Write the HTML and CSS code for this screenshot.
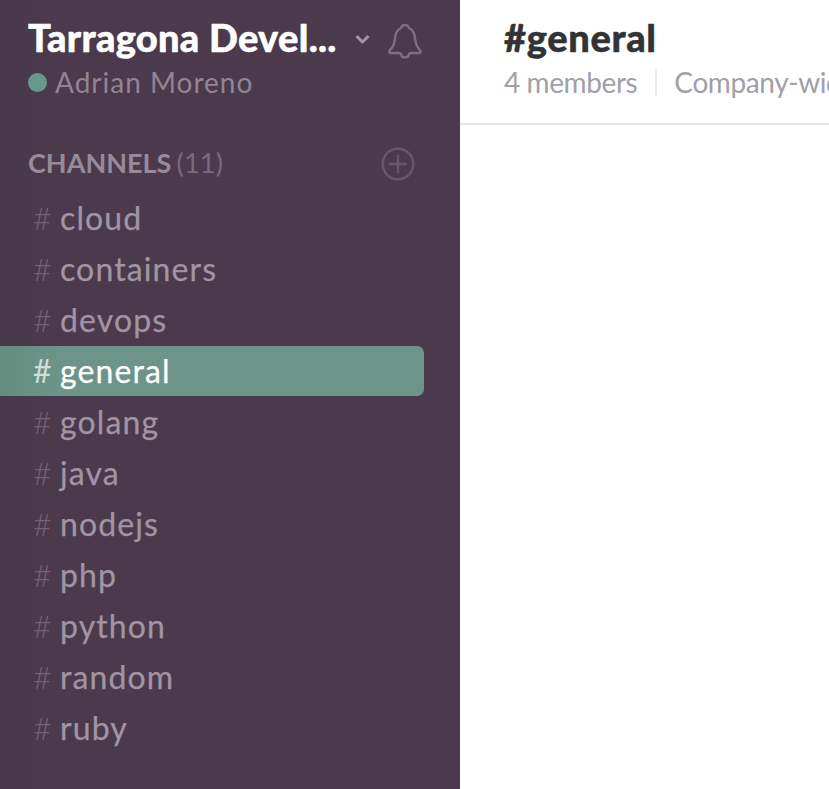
FILE: index.html
```html
<!DOCTYPE html>
<html lang="en">
<head>
<meta charset="utf-8">
<title>Tarragona Developers</title>
<link rel="stylesheet" href="styles.css">
</head>
<body>
<div class="app">
  <aside class="sidebar">
    <header class="team">
      <div class="team-row">
        <h1 class="team-name">Tarragona Devel...</h1>
        <svg class="chevron" width="18" height="14" viewBox="0 0 18 14"><path d="M2.500 4l6 6 6-6"/></svg>
        <svg class="bell" width="36" height="38" viewBox="0 0 36 38"><path d="M18 3C15.800 3 14.500 4 14 6C10.500 7.500 8.500 11 8 16C7.500 21.500 6 25.500 3 28C1.500 29.500 2.500 31 4.500 31H12.500C14 31 14 32 14.500 33.500C15.500 36 20.500 36 21.500 33.500C22 32 22 31 23.500 31H31.500C33.500 31 34.500 29.500 33 28C30 25.500 28.500 21.500 28 16C27.500 11 25.500 7.500 22 6C21.500 4 20.200 3 18 3Z"/></svg>
      </div>
      <div class="user"><span class="presence"></span><span class="user-name">Adrian Moreno</span></div>
    </header>
    <div class="section">
      <h2 class="section-title">CHANNELS</h2><span class="count">(11)</span>
      <svg class="add" width="34" height="34" viewBox="0 0 34 34"><circle cx="17" cy="17" r="15.300"/><path d="M17 9v16M9 17h16"/></svg>
    </div>
    <ul class="channels">
      <li><span class="hash">#</span><span class="name">cloud</span></li>
      <li><span class="hash">#</span><span class="name">containers</span></li>
      <li><span class="hash">#</span><span class="name">devops</span></li>
      <li class="active"><span class="hash">#</span><span class="name">general</span></li>
      <li><span class="hash">#</span><span class="name">golang</span></li>
      <li><span class="hash">#</span><span class="name">java</span></li>
      <li><span class="hash">#</span><span class="name">nodejs</span></li>
      <li><span class="hash">#</span><span class="name">php</span></li>
      <li><span class="hash">#</span><span class="name">python</span></li>
      <li><span class="hash">#</span><span class="name">random</span></li>
      <li><span class="hash">#</span><span class="name">ruby</span></li>
    </ul>
  </aside>
  <main class="main">
    <header class="channel-header">
      <h2 class="channel-title">#general</h2>
      <div class="meta"><span class="members">4 members</span><span class="topic">Company-wide</span></div>
    </header>
  </main>
</div>
</body>
</html>
```
FILE: styles.css
```css
* { box-sizing: border-box; }
body { margin: 0; font-family: Lato, "Liberation Sans", sans-serif; overflow: hidden; }
h1, h2, ul { margin: 0; padding: 0; }
svg { fill: none; stroke-linecap: round; stroke-linejoin: round; flex: none; }
.app { display: flex; width: 829px; height: 789px; overflow: hidden; }
.sidebar { width: 460px; flex: none; background: linear-gradient(90deg, #47394a, #4a3a4c 60px); color: #a195a3; }
.team { padding: 14px 0 0 28px; height: 143px; }
.team-row { display: flex; align-items: center; height: 46px; }
.team-name { width: 326px; font-size: 38px; line-height: 46px; font-weight: 900; letter-spacing: .3px; -webkit-text-stroke: .5px; color: #fff; white-space: nowrap; }
.chevron { margin-top: 4px; stroke: #a195a3; stroke-width: 3; stroke-linecap: butt; }
.bell { margin: 8px 0 0 15px; stroke: #7d7080; stroke-width: 2.4; }
.user { display: flex; align-items: center; height: 44px; font-size: 28px; letter-spacing: 1px; color: #918594; }
.presence { width: 19px; height: 19px; margin-top: 1px; border-radius: 50%; background: #68978b; margin-right: 8px; }
.section { display: flex; align-items: center; height: 40px; padding: 0 45px 0 28px; }
.section-title { margin-top: -1px; font-size: 27px; font-weight: 700; letter-spacing: 0; color: #978b99; }
.count { margin-top: -2px; font-size: 27px; letter-spacing: .3px; margin-left: 5px; color: #786b7a; }
.add { margin: 2px 0 0 auto; stroke: #665868; stroke-width: 2.5; }
.channels { list-style: none; padding-top: 10px; }
.channels li { display: flex; align-items: center; width: 424px; height: 51px; padding: 0 0 2px 33px; font-size: 32px; letter-spacing: 1.12px; }
.hash { width: 27px; font-weight: 300; color: #716374; }
.name { -webkit-text-stroke: .25px; }
.channels .active { height: 50px; margin-bottom: 1px; border-radius: 0 7px 7px 0; background: linear-gradient(90deg, #668c80, #6c9488 60px); color: #fff; }
.active .hash { color: #cfdeda; font-weight: 400; }
.main { flex: 1; min-width: 0; overflow: hidden; background: #fff; }
.channel-header { height: 125px; padding: 14px 0 0 44px; border-bottom: 2px solid #e6e6e8; white-space: nowrap; }
.channel-title { font-size: 38px; line-height: 46px; font-weight: 900; letter-spacing: .65px; -webkit-text-stroke: .5px; color: #323335; }
.meta { display: flex; align-items: center; height: 44px; font-size: 28px; letter-spacing: -.4px; color: #a0a0a8; }
.topic { margin-left: 18px; padding-left: 17px; border-left: 2px solid #ebebed; line-height: 27px; }
```
